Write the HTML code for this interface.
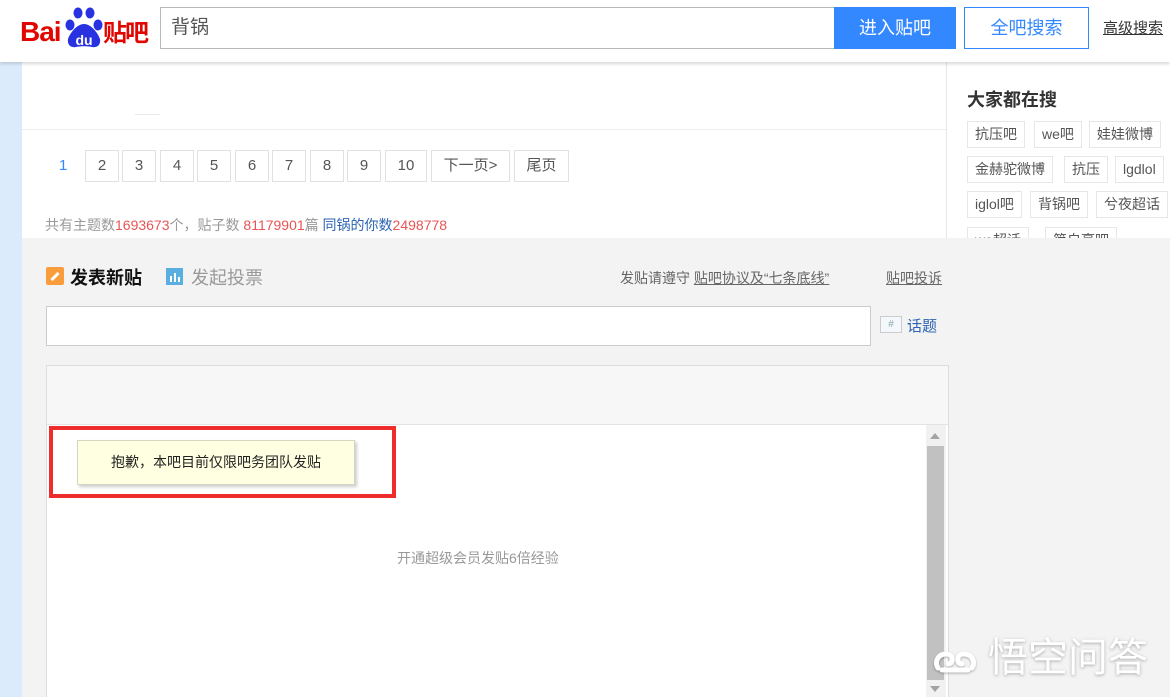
<!DOCTYPE html>
<html><head><meta charset="utf-8"><style>
*{margin:0;padding:0;box-sizing:border-box}
html,body{width:1170px;height:697px;overflow:hidden}
body{position:relative;background:#f3f3f3;font-family:"Liberation Sans","Noto Sans CJK SC",sans-serif;font-size:14px;color:#333}
.a{position:absolute}
.pg{position:absolute;top:150px;height:32px;border:1px solid #e1e1e1;background:#fff;color:#555;font-size:15px;line-height:30px;text-align:center}
.tag{position:absolute;height:27px;border:1px solid #e6e6e6;background:#fff;color:#555;font-size:14px;line-height:25px;padding:0 7px;white-space:nowrap}
</style></head><body>
<div class="a" style="left:0;top:62px;width:22px;height:635px;background:#dcebfb"></div>
<div class="a" style="left:22px;top:62px;width:925px;height:176px;background:#fff"></div>
<div class="a" style="left:946px;top:62px;width:1px;height:176px;background:#e6e6e6"></div>
<div class="a" style="left:947px;top:62px;width:223px;height:176px;background:#fff"></div>
<div class="a" style="left:22px;top:129px;width:924px;height:1px;background:#eee"></div>
<div class="a" style="left:135px;top:114px;width:25px;height:1px;background:#e8e8e8"></div>
<!-- header -->
<div class="a" style="left:0;top:0;width:1170px;height:62px;background:#fff;box-shadow:0 2px 3px rgba(0,0,0,.15)"></div>
<div class="a" style="left:20px;top:16px;font:bold 28px 'Liberation Sans',sans-serif;color:#e10601;letter-spacing:-1px">Bai</div>
<svg class="a" style="left:64px;top:5px" width="40" height="44" viewBox="0 0 40 44"><g fill="#2932e1"><ellipse cx="6" cy="20" rx="4.5" ry="5.5"/><ellipse cx="14" cy="8" rx="4.5" ry="5.5"/><ellipse cx="26" cy="8" rx="4.5" ry="5.5"/><ellipse cx="34" cy="20" rx="4.5" ry="5.5"/><path d="M20 19c-7 0-14 9-16 15-1 6 3 9 8 8 4-1 12-1 16 0 5 1 9-2 8-8-2-6-9-15-16-15z"/></g><text x="20" y="40" font-size="14" font-weight="bold" fill="#fff" text-anchor="middle" font-family="Liberation Sans">du</text></svg>
<div class="a" style="left:103px;top:14px;font:bold 24px 'Noto Sans CJK SC',sans-serif;color:#e10601;line-height:34px;letter-spacing:-2px">贴吧</div>
<div class="a" style="left:160px;top:7px;width:675px;height:42px;border:1px solid #b8b8b8;background:#fff;font-size:19px;color:#555;line-height:40px;padding-left:10px">背锅</div>
<div class="a" style="left:834px;top:7px;width:122px;height:42px;background:#3388ff;color:#fff;font-size:18px;line-height:42px;text-align:center">进入贴吧</div>
<div class="a" style="left:964px;top:7px;width:125px;height:42px;border:1px solid #3388ff;background:#fff;color:#3388ff;font-size:18px;line-height:40px;text-align:center">全吧搜索</div>
<div class="a" style="left:1103px;top:17px;font-size:15px;color:#333;text-decoration:underline">高级搜索</div>
<!-- pagination -->
<div class="a" style="left:59px;top:157px;font-size:15px;color:#3388ff">1</div>
<div class="pg" style="left:85px;width:34px">2</div>
<div class="pg" style="left:122px;width:34px">3</div>
<div class="pg" style="left:160px;width:34px">4</div>
<div class="pg" style="left:197px;width:34px">5</div>
<div class="pg" style="left:235px;width:34px">6</div>
<div class="pg" style="left:272px;width:34px">7</div>
<div class="pg" style="left:310px;width:34px">8</div>
<div class="pg" style="left:347px;width:34px">9</div>
<div class="pg" style="left:385px;width:42px">10</div>
<div class="pg" style="left:431px;width:79px">下一页&gt;</div>
<div class="pg" style="left:514px;width:55px">尾页</div>
<div class="a" style="left:45px;top:215px;font-size:14px;color:#999;white-space:nowrap">共有主题数<span style="color:#e85454">1693673</span>个，贴子数 <span style="color:#e85454">81179901</span>篇 <span style="color:#2d64b3">同锅的你数</span><span style="color:#e85454">2498778</span></div>
<!-- sidebar -->
<div class="a" style="left:967px;top:86px;font-size:18px;font-weight:bold;color:#333">大家都在搜</div>
<div class="tag" style="left:967px;top:121px">抗压吧</div>
<div class="tag" style="left:1034px;top:121px">we吧</div>
<div class="tag" style="left:1089px;top:121px">娃娃微博</div>
<div class="tag" style="left:967px;top:156px">金赫驼微博</div>
<div class="tag" style="left:1064px;top:156px">抗压</div>
<div class="tag" style="left:1115px;top:156px">lgdlol</div>
<div class="tag" style="left:967px;top:191px">iglol吧</div>
<div class="tag" style="left:1030px;top:191px">背锅吧</div>
<div class="tag" style="left:1096px;top:191px">兮夜超话</div>
<div class="a" style="left:947px;top:225px;width:223px;height:13px;overflow:hidden"><div class="tag" style="left:20px;top:2px">we超话</div><div class="tag" style="left:98px;top:2px">简自豪吧</div></div>
<!-- post header -->
<div class="a" style="left:46px;top:267px;width:18px;height:18px;background:#f99c3c;border-radius:2px"><div style="position:absolute;left:4px;top:8px;width:10px;height:3px;background:#fff;transform:rotate(-45deg)"></div></div>
<div class="a" style="left:70px;top:264px;font-size:18px;font-weight:bold;color:#111">发表新贴</div>
<div class="a" style="left:166px;top:268px;width:17px;height:17px;background:#5aaee0"><div style="position:absolute;left:4px;top:8px;width:2px;height:6px;background:#fff"></div><div style="position:absolute;left:8px;top:5px;width:2px;height:9px;background:#fff"></div><div style="position:absolute;left:12px;top:9px;width:2px;height:5px;background:#fff"></div></div>
<div class="a" style="left:191px;top:264px;font-size:18px;color:#999">发起投票</div>
<div class="a" style="left:620px;top:268px;font-size:14px;color:#666;white-space:nowrap">发贴请遵守 <u>贴吧协议及“七条底线”</u></div>
<div class="a" style="left:886px;top:268px;font-size:14px;color:#666;text-decoration:underline">贴吧投诉</div>
<div class="a" style="left:46px;top:306px;width:825px;height:40px;border:1px solid #ccc;background:#fff"></div>
<div class="a" style="left:880px;top:316px;width:22px;height:17px;border:1px solid #ccc;background:#f4f8fc;font-size:10px;color:#8aa;text-align:center;line-height:15px">#</div>
<div class="a" style="left:907px;top:315px;font-size:15px;color:#2d64b3">话题</div>
<!-- editor -->
<div class="a" style="left:46px;top:365px;width:903px;height:332px;border:1px solid #ddd;border-bottom:none;background:#f7f7f7"></div>
<div class="a" style="left:47px;top:424px;width:901px;height:273px;background:#fff;border-top:1px solid #e3e3e3"></div>
<div class="a" style="left:926px;top:425px;width:20px;height:272px;background:#f1f1f1"></div>
<div class="a" style="left:930px;top:433px;width:0;height:0;border-left:5px solid transparent;border-right:5px solid transparent;border-bottom:6px solid #a3a3a3"></div>
<div class="a" style="left:927px;top:446px;width:17px;height:234px;background:#c1c1c1"></div>
<div class="a" style="left:930px;top:686px;width:0;height:0;border-left:5px solid transparent;border-right:5px solid transparent;border-top:6px solid #a3a3a3"></div>
<div class="a" style="left:49px;top:426px;width:347px;height:72px;border:4px solid #ee2c2c"></div>
<div class="a" style="left:77px;top:440px;width:278px;height:45px;background:#ffffe1;border:1px solid #d6d6c0;box-shadow:2px 2px 3px rgba(0,0,0,.2);font-size:14px;color:#222;line-height:43px;text-align:center">抱歉，本吧目前仅限吧务团队发贴</div>
<div class="a" style="left:397px;top:548px;font-size:14px;color:#999">开通超级会员发贴6倍经验</div>
<!-- watermark -->
<svg class="a" style="left:932px;top:640px" width="46" height="36" viewBox="0 0 46 36"><g fill="none" stroke="#fff" stroke-width="5" stroke-linecap="round" style="filter:drop-shadow(0 1px 1px rgba(0,0,0,.3))"><path d="M6 28c-4-6 0-14 8-14s8 10 2 10"/><path d="M40 28c4-6 0-14-8-14s-8 10-2 10"/><path d="M10 30h26"/></g></svg>
<div class="a" style="left:988px;top:634px;font-size:40px;line-height:48px;color:#fff;text-shadow:0 1px 3px rgba(0,0,0,.3);white-space:nowrap">悟空问答</div>
</body></html>
